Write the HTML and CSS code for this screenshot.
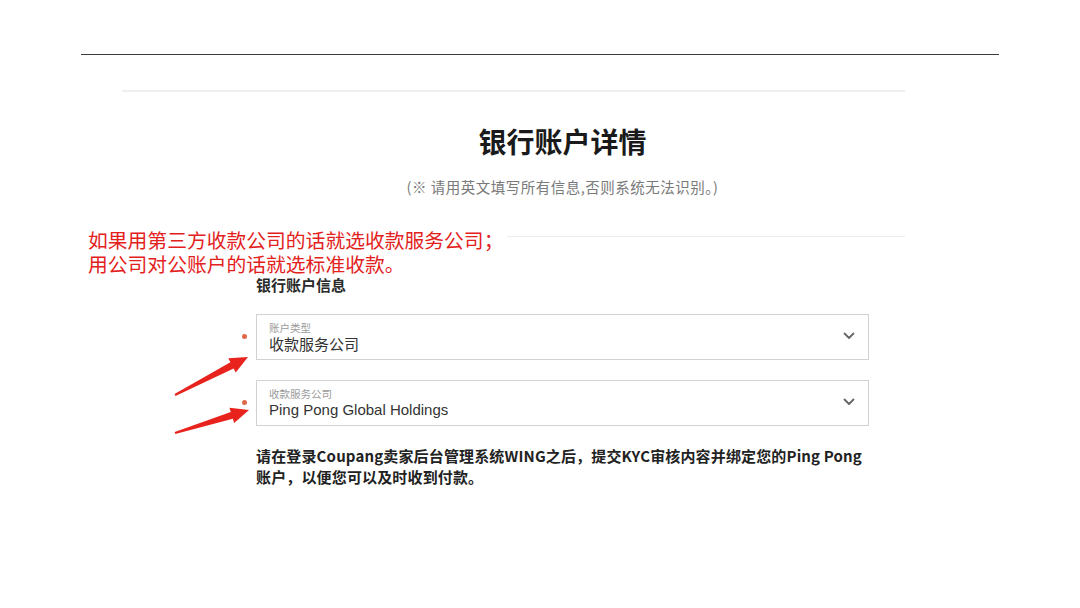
FILE: index.html
```html
<!DOCTYPE html>
<html lang="zh-CN">
<head>
<meta charset="utf-8">
<title>银行账户详情</title>
<link rel="stylesheet" href="styles.css">
</head>
<body>
<div class="slide">
  <div class="top-rule"></div>
  <section class="card">
    <div class="column">
      <h1 class="title">银行账户详情</h1>
      <p class="subtitle">(※ 请用英文填写所有信息,否则系统无法识别。)</p>
    </div>
    <div class="divider"></div>
    <div class="column">
      <h2 class="section-title">银行账户信息</h2>
      <div class="field required">
        <div class="field-text">
          <span class="field-label">账户类型</span>
          <span class="field-value">收款服务公司</span>
        </div>
        <svg class="chevron" viewBox="0 0 12 8" width="12" height="8"><path d="M1.5 1.5 L6 6 L10.5 1.5" fill="none" stroke="#666" stroke-width="1.8" stroke-linecap="round" stroke-linejoin="round"/></svg>
      </div>
      <div class="field required">
        <div class="field-text">
          <span class="field-label">收款服务公司</span>
          <span class="field-value latin">Ping Pong Global Holdings</span>
        </div>
        <svg class="chevron" viewBox="0 0 12 8" width="12" height="8"><path d="M1.5 1.5 L6 6 L10.5 1.5" fill="none" stroke="#666" stroke-width="1.8" stroke-linecap="round" stroke-linejoin="round"/></svg>
      </div>
      <p class="notice">请在登录Coupang卖家后台管理系统WING之后，提交KYC审核内容并绑定您的Ping Pong<br>账户，以便您可以及时收到付款。</p>
    </div>
  </section>

  <div class="annotation">
    <div class="annotation-line">如果用第三方收款公司的话就选收款服务公司；</div>
    <div class="annotation-line">用公司对公账户的话就选标准收款。</div>
  </div>

  <svg class="arrows" viewBox="0 0 1080 608" width="1080" height="608">
    <polygon fill="#e8231d" points="174.54,394.11 230.41,362.22 228.33,358.22 248,357 235.73,372.42 233.65,368.42 175.46,395.89"/>
    <polygon fill="#e8231d" points="174.7,432.04 230.77,412.01 229.43,407.71 249,410 234.19,422.99 232.85,418.69 175.3,433.96"/>
  </svg>
</div>
</body>
</html>
```

FILE: styles.css
```css
* { box-sizing: border-box; }

html, body {
  margin: 0;
  padding: 0;
  background: #ffffff;
}

body {
  font-family: "Noto Sans CJK SC", "Noto Sans", sans-serif;
  color: #222;
}

.slide {
  position: relative;
  width: 1080px;
  height: 608px;
  padding-top: 54px;
  overflow: hidden;
}

.top-rule {
  margin: 0 81px;
  border-top: 1px solid #3c3c3c;
}

.card {
  margin: 35px 0 0 122px;
  width: 783px;
  border-top: 2px solid #efefef;
}

.column {
  margin-left: 134px;
  width: 613px;
}

.title {
  margin: 31px 0 0 0;
  text-align: center;
  font-size: 28px;
  line-height: 36px;
  font-weight: 700;
  color: #1a1a1a;
}

.subtitle {
  margin: 18px 0 0 0;
  text-align: center;
  font-size: 14.5px;
  line-height: 20px;
  color: #7a7a7a;
  letter-spacing: 0.5px;
}

.divider {
  margin-top: 39px;
  border-top: 1px solid #ececec;
}

.section-title {
  margin: 40px 0 0 0;
  font-size: 15px;
  line-height: 16px;
  font-weight: 700;
  color: #2a2a2a;
}

.field {
  position: relative;
  margin-top: 21px;
  height: 46px;
  border: 1px solid #d2d2d2;
  display: flex;
  align-items: center;
  justify-content: space-between;
  padding: 0 12px 0 12px;
}

.field + .field {
  margin-top: 20px;
}

.field.required::before {
  content: "";
  position: absolute;
  left: -15px;
  top: 19px;
  width: 5px;
  height: 5px;
  border-radius: 50%;
  background: #e0684a;
}

.field-text {
  display: flex;
  flex-direction: column;
}

.field-label {
  font-size: 10.5px;
  line-height: 13px;
  color: #9a9a9a;
  margin-top: 1px;
}

.field-value {
  font-size: 15px;
  line-height: 20px;
  color: #333;
}

.field-value.latin {
  font-family: "Liberation Sans", "Noto Sans CJK SC", sans-serif;
}

.chevron {
  margin-right: 1px;
  margin-top: -2px;
}

.notice {
  margin: 19px 0 0 0;
  font-size: 15px;
  line-height: 21px;
  font-weight: 700;
  color: #222;
  letter-spacing: 0.15px;
  white-space: nowrap;
}

.annotation {
  position: absolute;
  left: 86px;
  top: 228px;
  padding: 0 4px 0 2px;
  background: #ffffff;
  font-size: 19.8px;
  color: #e3211c;
}

.annotation-line {
  height: 24px;
  line-height: 24px;
}

.arrows {
  position: absolute;
  left: 0;
  top: 0;
  pointer-events: none;
}
```
